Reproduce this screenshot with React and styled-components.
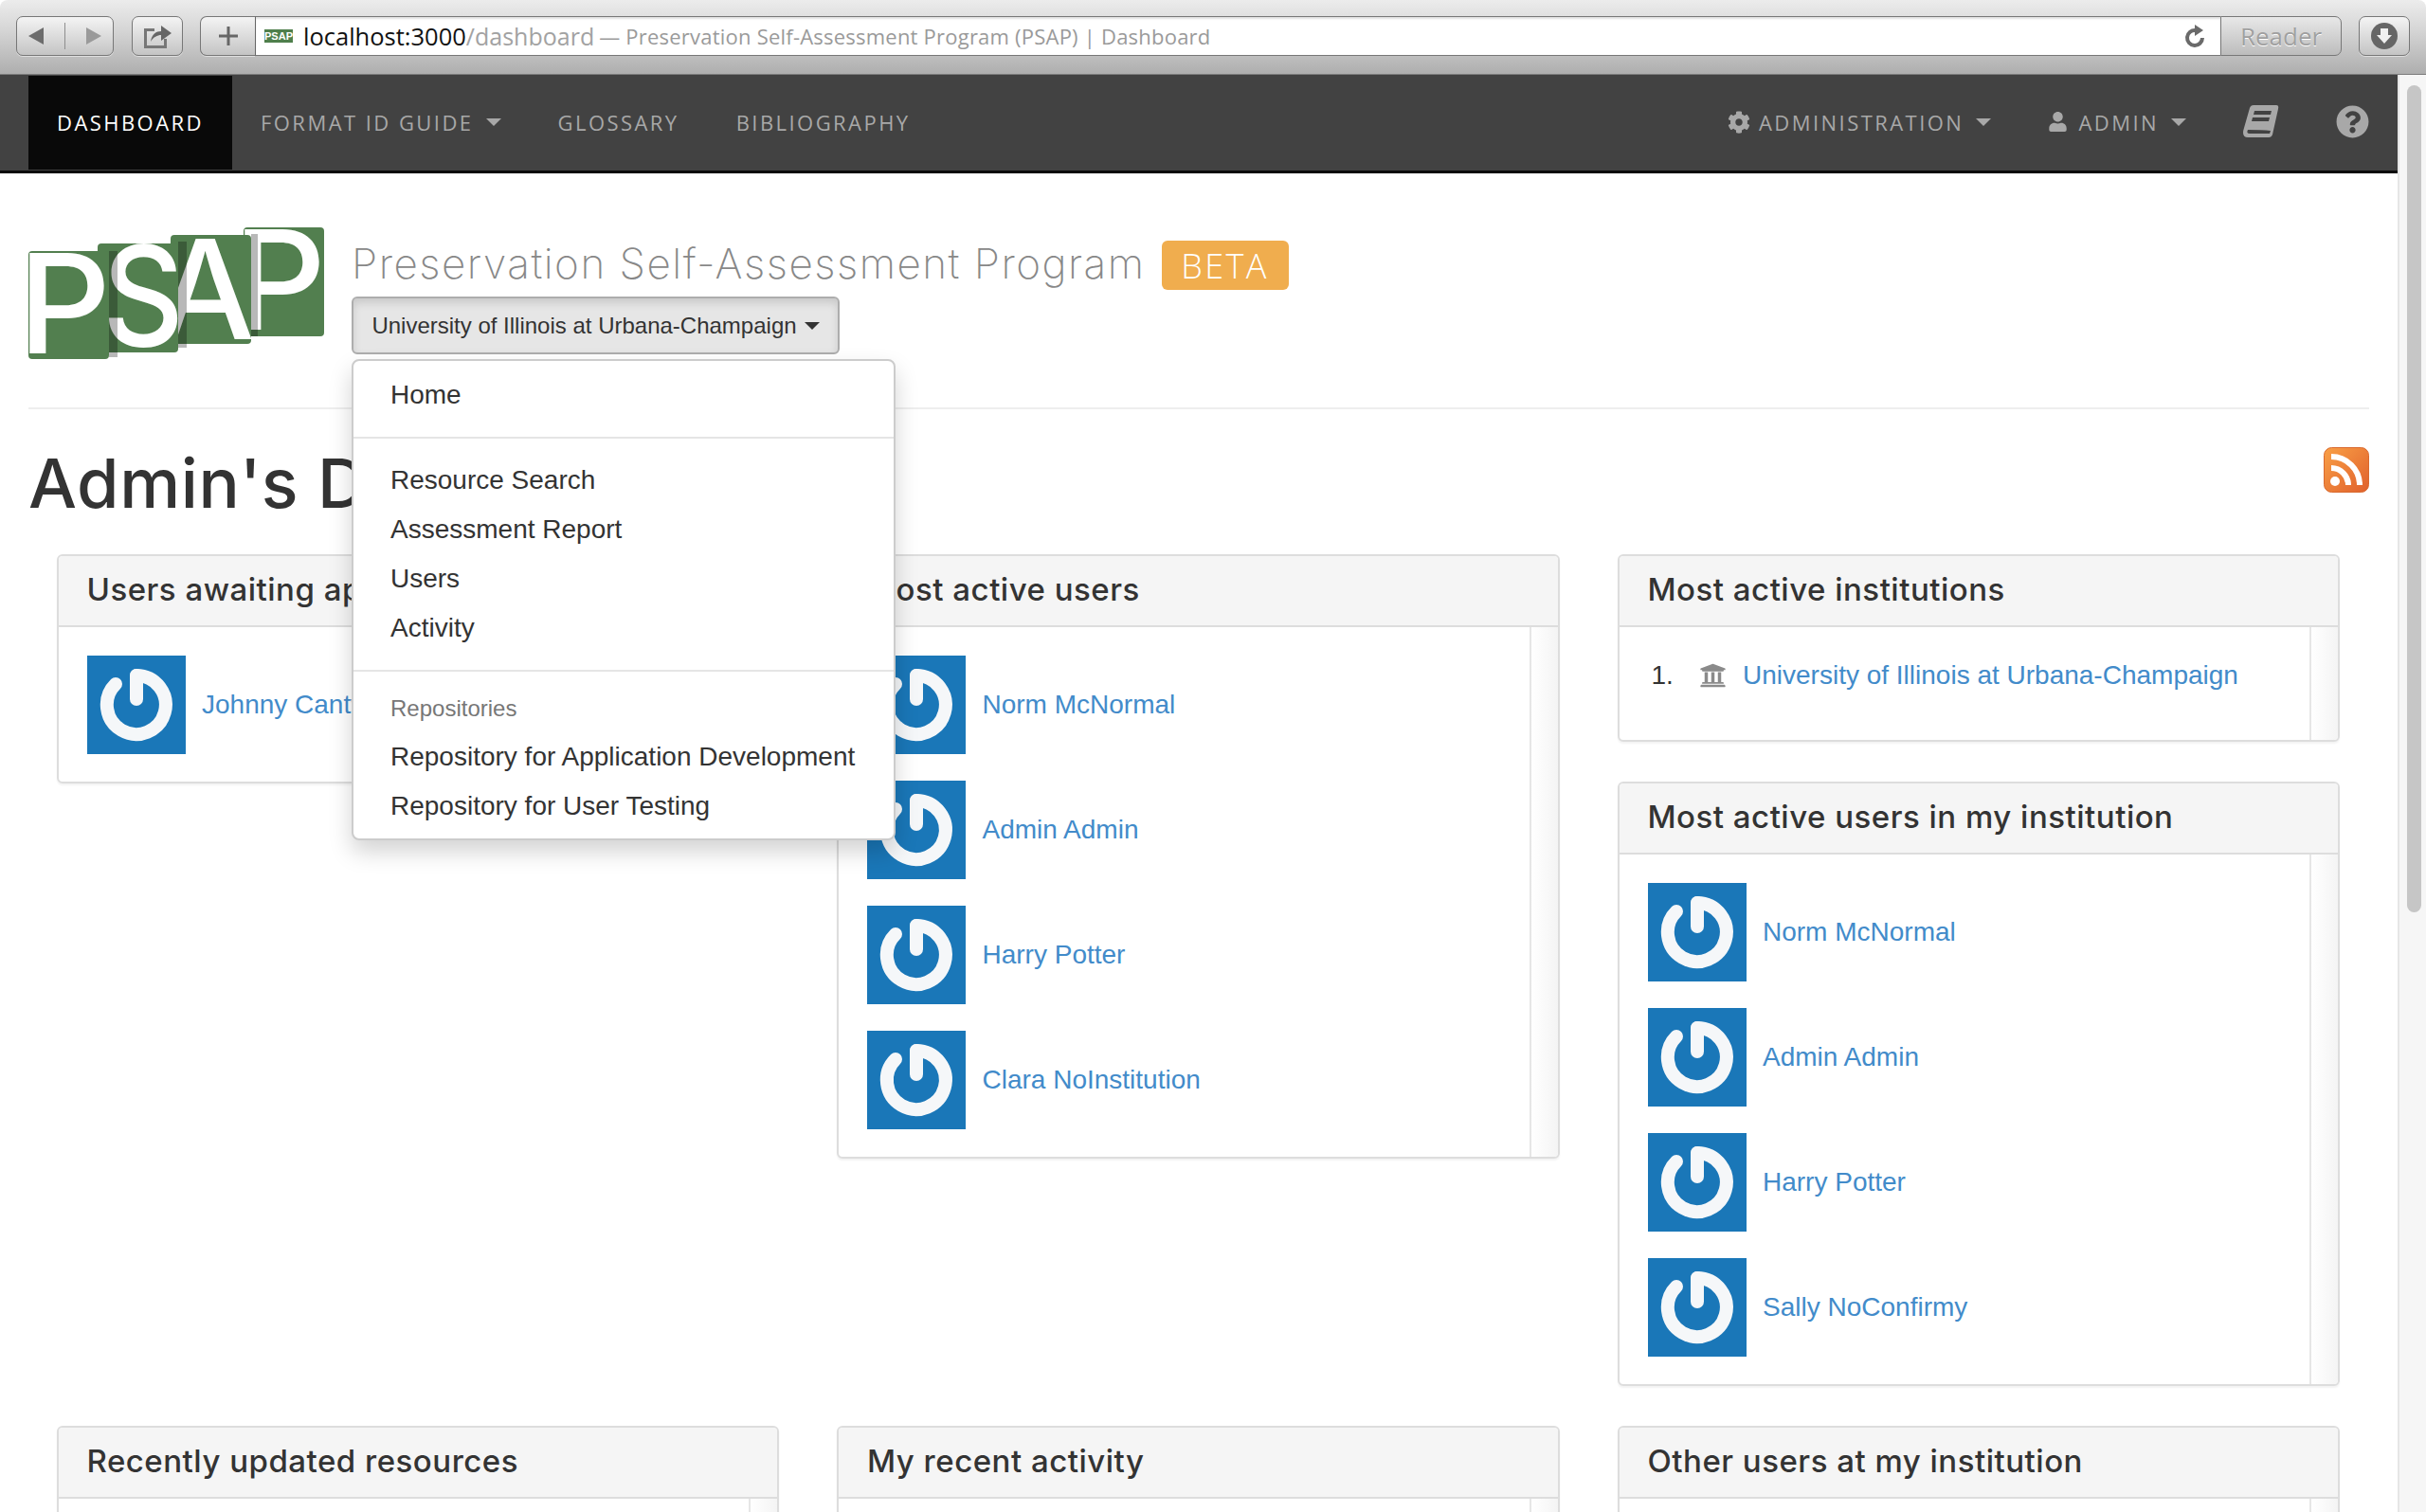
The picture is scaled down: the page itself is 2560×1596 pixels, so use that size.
import React from "react";
import styled, { createGlobalStyle } from "styled-components";
import { FaCog, FaUser, FaQuestionCircle, FaUniversity } from "react-icons/fa";

const GlobalStyle = createGlobalStyle`
  html, body {
    margin: 0;
    height: 100%;
    overflow: hidden;
    background: #fff;
  }
  body {
    font-family: "Liberation Sans", Arial, sans-serif;
    color: #333;
  }
`;

const Browser = styled.div`
  height: 1596px;
  overflow: hidden;
  display: flex;
  flex-direction: column;
`;

/* safari toolbar */
const Toolbar = styled.div`
  height: 79px;
  flex: none;
  box-sizing: border-box;
  padding: 17px 17px 0;
  display: flex;
  align-items: flex-start;
  background: linear-gradient(#ececec, #d6d6d6 40%, #aeaeae);
  border-bottom: 1px solid #7c7c7c;
  border-radius: 8px 8px 0 0;
`;

const ChromeButton = styled.div`
  width: ${(p) => p.$w}px;
  height: 42px;
  margin-right: ${(p) => p.$mr || 0}px;
  box-sizing: border-box;
  display: flex;
  align-items: center;
  justify-content: space-around;
  border: 1px solid #777;
  border-radius: 7px;
  background: linear-gradient(#f4f4f4, #c4c4c4);
  box-shadow: 0 1px 0 rgba(255, 255, 255, 0.5);
  flex: none;
`;

const NavDivider = styled.span`
  width: 1px;
  height: 28px;
  background: #8e8e8e;
`;

const PlusButton = styled(ChromeButton)`
  border-right: 0;
  border-radius: 7px 0 0 7px;
  color: #555;
`;

const AddressBar = styled.div`
  width: 2074px;
  height: 42px;
  flex: none;
  box-sizing: border-box;
  padding: 0 8px 0 9px;
  display: flex;
  align-items: center;
  background: #fff;
  border: 1px solid #777;
  border-left-color: #666;
  border-right: 0;
  box-shadow: inset 0 2px 2px rgba(0, 0, 0, 0.12);
  white-space: nowrap;
  font-family: "Open Sans", sans-serif;
`;

const Favicon = styled.span`
  width: 30px;
  height: 14px;
  margin-right: 11px;
  background: #4f7f4c;
  color: #fff;
  font: bold 11px/14px "Liberation Sans", sans-serif;
  text-align: center;
  overflow: hidden;
`;

const Host = styled.span`
  font-size: 25.5px;
  color: #111;
`;

const UrlPath = styled.span`
  font-size: 25px;
  color: #a2a2a2;
  margin-right: 5px;
`;

const PageTitle = styled.span`
  font-size: 22px;
  color: #9a9a9a;
  letter-spacing: 0.22px;
`;

const Reload = styled.svg`
  margin-left: auto;
  margin-right: 6px;
  width: 24px;
  height: 26px;
`;

const ReaderButton = styled.div`
  width: 128px;
  height: 42px;
  flex: none;
  box-sizing: border-box;
  margin-right: 18px;
  border: 1px solid #777;
  border-radius: 0 7px 7px 0;
  background: linear-gradient(#e8e8e8, #bcbcbc);
  color: #a0a0a0;
  text-shadow: 0 1px 0 #fff;
  font: 26px/40px "Open Sans", sans-serif;
  text-align: center;
`;

/* page */
const Frame = styled.div`
  flex: 1;
  min-height: 0;
  display: flex;
`;

const Page = styled.div`
  flex: 1;
  min-width: 0;
`;

const Scrollbar = styled.div`
  width: 30px;
  flex: none;
  box-sizing: border-box;
  padding: 11px 5px 0 8px;
  background: #f6f6f6;
  border-left: 2px solid #e6e6e6;
`;

const ScrollThumb = styled.div`
  height: 873px;
  border-radius: 9px;
  background: #c6c6c6;
`;

const Navbar = styled.nav`
  height: 104px;
  box-sizing: border-box;
  padding: 1px 30px 0;
  display: flex;
  background: #424242;
  border-bottom: 3px solid #0a0a0a;
  font: 22px "Open Sans", sans-serif;
  letter-spacing: 2.45px;
`;

const NavItem = styled.a`
  height: 99px;
  box-sizing: border-box;
  padding: 0 ${(p) => p.$pr ?? 30}px 2px 30px;
  display: flex;
  align-items: center;
  color: ${(p) => (p.$active ? "#fff" : "#a8a8a8")};
  background: ${(p) => (p.$active ? "#090909" : "transparent")};
`;

const NavRight = styled.div`
  margin-left: auto;
  display: flex;
`;

const NavCaret = styled.i`
  width: 0;
  height: 0;
  margin-left: 13px;
  border-left: 8px solid transparent;
  border-right: 8px solid transparent;
  border-top: 8px solid #a8a8a8;
`;

const CogIcon = styled(FaCog)`
  width: 24px;
  height: 24px;
  margin-right: 9px;
`;

const PersonIcon = styled(FaUser)`
  width: 21px;
  height: 21px;
  margin-right: 11px;
`;

const Content = styled.div`
  padding: 57px 30px 0;
`;

const Masthead = styled.header`
  display: flex;
  gap: 29px;
  height: 190px;
  border-bottom: 2px solid #eee;
`;

const TitleBlock = styled.div`
  position: relative;
  padding-top: 14px;
`;

const TitleRow = styled.div`
  display: flex;
  align-items: center;
  gap: 17px;
  height: 52px;
  margin-bottom: 7px;
`;

const Title = styled.h2`
  margin: 0 0 4px;
  font: 200 44px "Inter", sans-serif;
  letter-spacing: 1.5px;
  color: #888;
  white-space: nowrap;
`;

const Beta = styled.span`
  width: 134px;
  height: 52px;
  border-radius: 6px;
  background: #f0ad4e;
  color: #fff;
  font: 300 36px/54px "Open Sans", sans-serif;
  letter-spacing: 2.4px;
  text-align: center;
`;

const InstitutionButton = styled.button`
  width: 515px;
  height: 61px;
  padding: 0;
  display: flex;
  align-items: center;
  justify-content: center;
  gap: 8px;
  background: #e6e6e6;
  border: 2px solid #adadad;
  border-radius: 6px;
  box-shadow: inset 0 5px 8px rgba(0, 0, 0, 0.125);
  color: #333;
  font: 24px "Liberation Sans", sans-serif;
`;

const ButtonCaret = styled.i`
  width: 0;
  height: 0;
  border-left: 8px solid transparent;
  border-right: 8px solid transparent;
  border-top: 8px solid #333;
`;

const Menu = styled.ul`
  position: absolute;
  top: 139px;
  left: 0;
  width: 574px;
  height: 508px;
  box-sizing: border-box;
  margin: 0;
  padding: 10px 0;
  list-style: none;
  background: #fff;
  border: 2px solid #ccc;
  border-radius: 8px;
  box-shadow: 0 12px 24px rgba(0, 0, 0, 0.175);
  z-index: 10;
`;

const MenuItem = styled.li`
  padding: 0 39px;
  height: 52px;
  line-height: 52px;
  font-size: 28px;
  color: #333;
  white-space: nowrap;
`;

const MenuHeader = styled.li`
  padding: 0 39px;
  height: 46px;
  line-height: 42px;
  font-size: 24px;
  color: #777;
`;

const MenuDivider = styled.li`
  height: 2px;
  margin: 18px 0;
  background: #e5e5e5;
`;

const HeadingRow = styled.div`
  display: flex;
  align-items: flex-start;
  justify-content: space-between;
  height: 153px;
  padding-top: 40px;
  box-sizing: border-box;
`;

const Heading = styled.h1`
  margin: -1px 0 0;
  font: 500 72px/78px "Inter", sans-serif;
  letter-spacing: 0.6px;
  color: #333;
  white-space: nowrap;
`;

const PanelGrid = styled.div`
  display: grid;
  grid-template-columns: repeat(3, 762.5px);
  column-gap: 61px;
  row-gap: 42px;
  align-items: start;
  padding-left: 29.5px;
`;

const PanelStack = styled.div`
  display: flex;
  flex-direction: column;
  gap: 42px;
`;

const PanelBox = styled.section`
  border: 2px solid #ddd;
  border-radius: 6px;
  background: #fff;
  box-shadow: 0 2px 2px rgba(0, 0, 0, 0.05);
  overflow: hidden;
`;

const PanelTitle = styled.h3`
  margin: 0;
  height: 75px;
  box-sizing: border-box;
  padding: 0 30px;
  background: #f5f5f5;
  border-bottom: 2px solid #ddd;
  font: 500 33px/70px "Inter", sans-serif;
  letter-spacing: 0.5px;
  color: #333;
  white-space: nowrap;
`;

const PanelBody = styled.div`
  display: flex;
`;

const PanelMain = styled.div`
  flex: 1;
  min-width: 0;
  box-sizing: border-box;
  padding: 30px 30px 29px;
  min-height: ${(p) => p.$minH || 0}px;
  display: flex;
  flex-direction: column;
  gap: 28px;
`;

const PanelStrip = styled.div`
  width: 28px;
  flex: none;
  border-left: 2px solid #e6e6e6;
  background: linear-gradient(90deg, #fff, #f4f4f4);
`;

const UserRow = styled.div`
  display: flex;
  align-items: center;
  gap: 17.5px;
`;

const UserLink = styled.a`
  color: #428bca;
  font-size: 28px;
  white-space: nowrap;
`;

const AvatarBox = styled.svg`
  width: 104px;
  height: 104px;
  flex: none;
  display: block;
  background: #1a77b8;
`;

const InstitutionRow = styled.div`
  display: flex;
  align-items: center;
  height: 42px;
  font-size: 28px;
`;

const RowNumber = styled.span`
  width: 53.5px;
  padding-left: 4px;
  box-sizing: border-box;
`;

const BankIcon = styled(FaUniversity)`
  width: 31px;
  height: 28px;
  margin-right: 16px;
  color: #8a8a8a;
`;

const Avatar = () => (
  <AvatarBox viewBox="0 0 104 104">
    <g fill="none" stroke="#f5f7f9" strokeWidth="14" strokeLinecap="round" style={{ filter: "blur(0.7px)" }}>
      <path d="M52 21 A31 31 0 1 1 30 30" />
      <path d="M52 21 V46" />
    </g>
  </AvatarBox>
);

const User = ({ name }) => (
  <UserRow>
    <Avatar />
    <UserLink>{name}</UserLink>
  </UserRow>
);

const Panel = ({ title, minH, children }) => (
  <PanelBox>
    <PanelTitle>{title}</PanelTitle>
    <PanelBody>
      <PanelMain $minH={minH}>{children}</PanelMain>
      <PanelStrip />
    </PanelBody>
  </PanelBox>
);

const Logo = () => {
  const shadow = "rgba(0,0,0,0.28)";
  const letter = { fill: "#fff", fontFamily: "Inter, sans-serif", fontWeight: 500, fontSize: 146 };
  return (
    <svg width="312" height="140" viewBox="0 0 312 140" style={{ flex: "none" }}>
      <rect x="227" y="0" width="85" height="115" rx="4" fill="#527f4f" />
      <text x="216" y="108" textLength="98" lengthAdjust="spacingAndGlyphs" style={letter}>P</text>
      <rect x="235" y="7" width="7" height="108" fill={shadow} />
      <rect x="150" y="8" width="85" height="115" rx="4" fill="#527f4f" />
      <text x="135" y="118" textLength="104" lengthAdjust="spacingAndGlyphs" style={letter}>A</text>
      <rect x="158" y="15" width="9" height="112" fill={shadow} />
      <rect x="73" y="17" width="85" height="115" rx="4" fill="#527f4f" />
      <text x="78" y="125" textLength="86" lengthAdjust="spacingAndGlyphs" style={letter}>S</text>
      <rect x="85" y="25" width="9" height="112" fill={shadow} />
      <rect x="0" y="25" width="85" height="114" rx="4" fill="#527f4f" />
      <text x="-11" y="133" textLength="98" lengthAdjust="spacingAndGlyphs" style={letter}>P</text>
    </svg>
  );
};

const BookIcon = () => (
  <svg width="38" height="36" viewBox="0 0 38 36" fill="#a8a8a8">
    <path d="M11 0H35Q38 0 37 4L31 31Q30 34 27 34H5Q0 34 0 29Q0 27 1 24L7 3Q8 0 11 0ZM12 6L11 10H29L30 6ZM10 13L9 17H27L28 13ZM5 26Q3 30 7 30H28L29 27Q20 26 5 26Z" fillRule="evenodd" />
  </svg>
);

const RssIcon = () => (
  <svg width="48" height="48" viewBox="0 0 48 48">
    <defs>
      <linearGradient id="rss" x1="0" y1="0" x2="1" y2="1">
        <stop offset="0" stopColor="#f9a046" />
        <stop offset="1" stopColor="#e0602c" />
      </linearGradient>
    </defs>
    <rect x="0.5" y="0.5" width="47" height="47" rx="8" fill="url(#rss)" stroke="#d9692e" />
    <g fill="none" stroke="#fff" strokeWidth="6">
      <path d="M8 22A18 18 0 0 1 26 40" />
      <path d="M8 10A30 30 0 0 1 38 40" />
    </g>
    <circle cx="12" cy="36" r="5" fill="#fff" />
  </svg>
);

const App = () => (
  <Browser>
    <GlobalStyle />
    <Toolbar>
      <ChromeButton $w={103} $mr={19}>
        <svg width="20" height="20" viewBox="0 0 20 20"><path d="M18 1V19L2 10Z" fill="#6c6c6c" /></svg>
        <NavDivider />
        <svg width="20" height="20" viewBox="0 0 20 20"><path d="M2 1V19L18 10Z" fill="#9a9a9a" /></svg>
      </ChromeButton>
      <ChromeButton $w={54} $mr={18}>
        <svg width="34" height="30" viewBox="0 0 34 30">
          <path d="M3 7H14V10H6V25H24V18H27V28H3Z" fill="#777" />
          <path d="M10 21C11 13 16 10 21 10V4L32 12L21 20V14C17 14 13 16 10 21Z" fill="#666" />
        </svg>
      </ChromeButton>
      <PlusButton $w={58}>
        <svg width="22" height="22" viewBox="0 0 22 22"><path d="M9.5 1H12.5V9.5H21V12.5H12.5V21H9.5V12.5H1V9.5H9.5Z" fill="#666" /></svg>
      </PlusButton>
      <AddressBar>
        <Favicon>PSAP</Favicon>
        <Host>localhost:3000</Host>
        <UrlPath>/dashboard</UrlPath>
        <PageTitle>— Preservation Self-Assessment Program (PSAP) | Dashboard</PageTitle>
        <Reload viewBox="0 0 24 26">
          <path d="M19 15A8 8 0 1 1 12 7" fill="none" stroke="#6a6a6a" strokeWidth="4" />
          <path d="M11 1L20 7L11 13Z" fill="#6a6a6a" />
        </Reload>
      </AddressBar>
      <ReaderButton>Reader</ReaderButton>
      <ChromeButton $w={54}>
        <svg width="30" height="30" viewBox="0 0 30 30">
          <circle cx="15" cy="15" r="14" fill="#666" />
          <path d="M11 7H19V14H23L15 23L7 14H11Z" fill="#f0f0f0" />
        </svg>
      </ChromeButton>
    </Toolbar>

    <Frame>
      <Page>
        <Navbar>
          <NavItem $active>DASHBOARD</NavItem>
          <NavItem>FORMAT ID GUIDE<NavCaret /></NavItem>
          <NavItem>GLOSSARY</NavItem>
          <NavItem>BIBLIOGRAPHY</NavItem>
          <NavRight>
            <NavItem><CogIcon />ADMINISTRATION<NavCaret /></NavItem>
            <NavItem><PersonIcon />ADMIN<NavCaret /></NavItem>
            <NavItem><BookIcon /></NavItem>
            <NavItem $pr={0}><FaQuestionCircle size={35} /></NavItem>
          </NavRight>
        </Navbar>

        <Content>
          <Masthead>
            <Logo />
            <TitleBlock>
              <TitleRow>
                <Title>Preservation Self-Assessment Program</Title>
                <Beta>BETA</Beta>
              </TitleRow>
              <InstitutionButton>University of Illinois at Urbana-Champaign <ButtonCaret /></InstitutionButton>
              <Menu>
                <MenuItem>Home</MenuItem>
                <MenuDivider />
                <MenuItem>Resource Search</MenuItem>
                <MenuItem>Assessment Report</MenuItem>
                <MenuItem>Users</MenuItem>
                <MenuItem>Activity</MenuItem>
                <MenuDivider />
                <MenuHeader>Repositories</MenuHeader>
                <MenuItem>Repository for Application Development</MenuItem>
                <MenuItem>Repository for User Testing</MenuItem>
              </Menu>
            </TitleBlock>
          </Masthead>

          <HeadingRow>
            <Heading>Admin's Dashboard</Heading>
            <RssIcon />
          </HeadingRow>

          <PanelGrid>
            <Panel title="Users awaiting approval">
              <User name="Johnny Cantwell" />
            </Panel>
            <Panel title="Most active users">
              <User name="Norm McNormal" />
              <User name="Admin Admin" />
              <User name="Harry Potter" />
              <User name="Clara NoInstitution" />
            </Panel>
            <PanelStack>
              <Panel title="Most active institutions" minH={119}>
                <InstitutionRow>
                  <RowNumber>1.</RowNumber>
                  <BankIcon />
                  <UserLink>University of Illinois at Urbana-Champaign</UserLink>
                </InstitutionRow>
              </Panel>
              <Panel title="Most active users in my institution">
                <User name="Norm McNormal" />
                <User name="Admin Admin" />
                <User name="Harry Potter" />
                <User name="Sally NoConfirmy" />
              </Panel>
            </PanelStack>
            <Panel title="Recently updated resources" minH={200} />
            <Panel title="My recent activity" minH={200} />
            <Panel title="Other users at my institution" minH={200} />
          </PanelGrid>
        </Content>
      </Page>
      <Scrollbar>
        <ScrollThumb />
      </Scrollbar>
    </Frame>
  </Browser>
);

export default App;
